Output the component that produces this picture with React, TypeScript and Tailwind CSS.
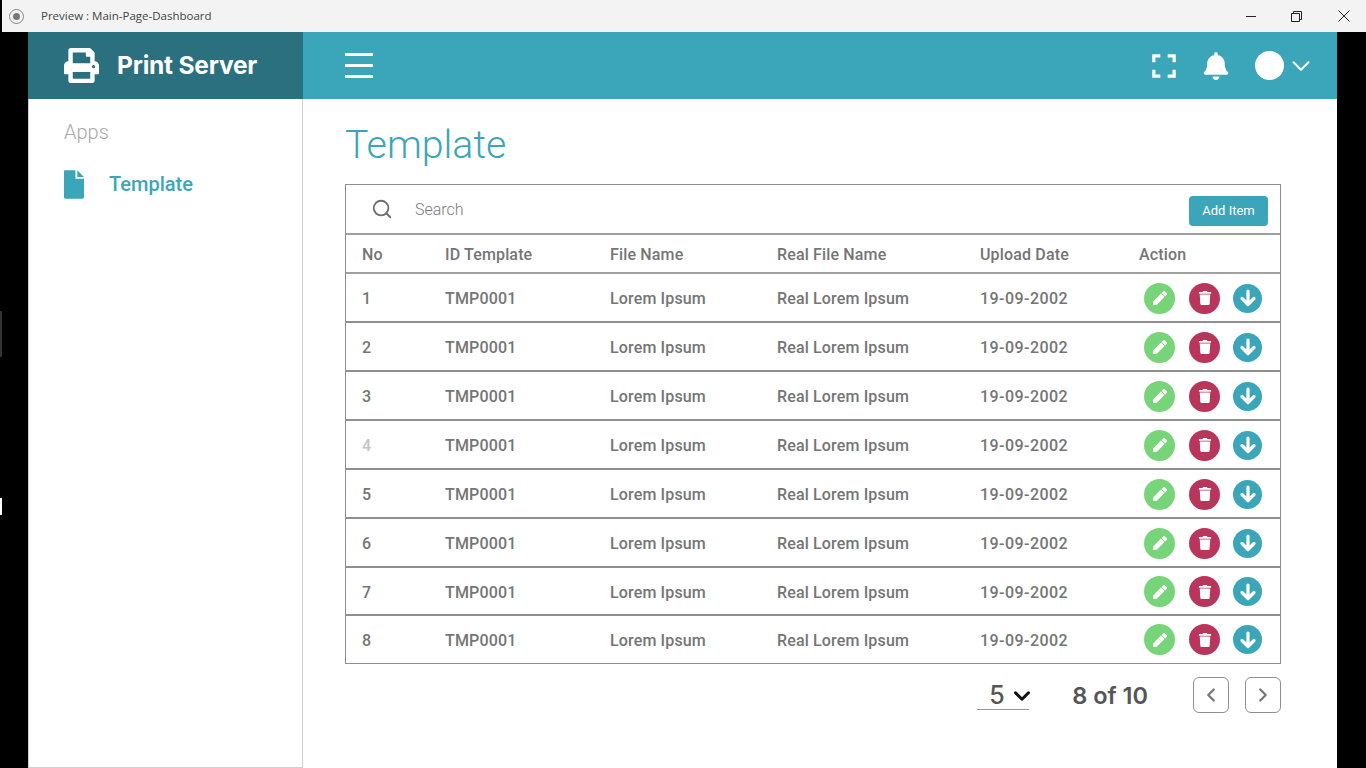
import { ChevronDown, ChevronLeft, ChevronRight, Search } from 'lucide-react';
import { FaBell, FaPen, FaPrint, FaTrash } from 'react-icons/fa';

const ROWS = [1, 2, 3, 4, 5, 6, 7, 8];
const COLS = 'grid grid-cols-[83px_165px_167px_203px_159px_1fr] items-center pl-4 tracking-[0.15px]';

// rows in the screenshot are not all the same height
function rowClass(row: number): string {
    if (row === 8) return 'h-[47px] pt-[2px]';
    if (row === 7) return 'h-[48px] border-b-2 pt-[3px]';
    return 'h-[49px] border-b-2 pt-[3px]';
}

function FileIcon() {
    return (
        <svg width="20" height="29" viewBox="0 0 21 30" className="text-[#3ba6b9]" fill="currentColor">
            <path d="M1 0h11v9h9v19.500a1.500 1.500 0 0 1-1.500 1.500h-18A1.500 1.500 0 0 1 0 28.500V1a1 1 0 0 1 1-1z" />
            <path d="M14 0l7 7h-7z" />
        </svg>
    );
}

function FullscreenIcon() {
    return (
        <svg width="24" height="24" viewBox="0 0 26 26" fill="none" stroke="white" strokeWidth="3.500">
            <path d="M2 9V2h7M17 2h7v7M24 17v7h-7M9 24H2v-7" />
        </svg>
    );
}

function ArrowIcon() {
    return (
        <svg width="20" height="20" viewBox="0 0 20 20" fill="none" stroke="white" strokeWidth="3.200" strokeLinecap="round" strokeLinejoin="round">
            <path d="M10 3v13M4 10.500l6 6 6-6" />
        </svg>
    );
}

function TitleBar() {
    return (
        <div className="ml-[2px] flex h-8 shrink-0 items-center bg-[#f3f3f3] font-['Open_Sans',sans-serif] text-[11.5px] text-[#444]">
            <div className="ml-[7px] flex h-[15px] w-[15px] items-center justify-center rounded-full border border-[#8a8a8a]">
                <div className="h-[7px] w-[7px] rounded-full bg-[#777]" />
            </div>
            <span className="ml-[17px]">Preview : Main-Page-Dashboard</span>
            <div className="ml-auto flex items-center text-[#222]">
                <div className="mr-[35px] h-px w-[10px] bg-[#222]" />
                <svg width="11" height="11" viewBox="0 0 11 11" fill="none" stroke="#222" className="mr-[36px]">
                    <path d="M.5 2.500h8v8h-8zM2.500 2.500v-2h8v8h-2" />
                </svg>
                <svg width="12" height="12" viewBox="0 0 12 12" fill="none" stroke="#222" className="mr-[16px]">
                    <path d="M.5.5l11 11M11.500.5l-11 11" />
                </svg>
            </div>
        </div>
    );
}

function Header() {
    return (
        <div className="flex h-[67px] shrink-0">
            <div className="flex w-[275px] shrink-0 items-center bg-[#2b707f] pl-[36px]">
                <FaPrint className="text-white" size={35} />
                <span className="ml-[18px] font-['Inter',sans-serif] text-[24.5px] font-bold tracking-[-0.2px] text-white">Print Server</span>
            </div>
            <div className="flex flex-1 items-center bg-[#3ba6b9] pl-[42px]">
                <div className="flex w-7 flex-col gap-[8px]">
                    <div className="h-[3px] bg-white" />
                    <div className="h-[3px] bg-white" />
                    <div className="h-[3px] bg-white" />
                </div>
                <div className="ml-auto flex items-center pr-[21px]">
                    <FullscreenIcon />
                    <FaBell size={28} className="ml-[26px] text-white" />
                    <div className="ml-[25px] h-[29px] w-[29px] rounded-full bg-white" />
                    <ChevronDown size={30} stroke="white" strokeWidth={1.6} className="ml-[2px]" />
                </div>
            </div>
        </div>
    );
}

function Sidebar() {
    return (
        <aside className="w-[275px] shrink-0 border-x border-b border-[#cfcfcf] bg-white pl-[35px]">
            <div className="pt-[21px] text-[20px] font-light leading-6 text-[#a9a9a9]">Apps</div>
            <div className="mt-[25px] flex items-center">
                <FileIcon />
                <span className="ml-[25px] text-[20px] font-medium text-[#3ba6b9]">Template</span>
            </div>
        </aside>
    );
}

function ActionButtons() {
    return (
        <div className="-mt-[2px] flex items-center pl-[5px]">
            <div className="flex h-[31px] w-[31px] items-center justify-center rounded-full bg-[#78d478]">
                <FaPen className="text-white" size={14} />
            </div>
            <div className="ml-[14px] flex h-[31px] w-[31px] items-center justify-center rounded-full bg-[#b8365b]">
                <FaTrash className="text-white" size={14} />
            </div>
            <div className="ml-[13px] flex h-[29px] w-[29px] items-center justify-center rounded-full bg-[#3ba6b9]">
                <ArrowIcon />
            </div>
        </div>
    );
}

function TemplateTable() {
    return (
        <div className="mt-[14px] border border-[#8f8f8f] bg-white">
            <div className="flex h-[50px] items-center border-b-2 border-[#a0a0a0] pl-[26px] pr-[12px]">
                <Search size={22} stroke="#6e6e6e" className="-ml-[1px]" />
                <span className="ml-[22px] pt-[2px] text-[16px] font-light text-[#7a7a7a]">Search</span>
                <div className="ml-auto mt-1 flex h-[30px] w-[79px] items-center justify-center rounded bg-[#3ba6b9] text-[13px] text-white">
                    Add Item
                </div>
            </div>
            <div className={`${COLS} h-[39px] border-b-2 border-[#a0a0a0] pt-[2px] text-[16px] font-medium text-[#757575]`}>
                <div>No</div>
                <div>ID Template</div>
                <div>File Name</div>
                <div>Real File Name</div>
                <div>Upload Date</div>
                <div>Action</div>
            </div>
            {ROWS.map(row => (
                <div
                    key={row}
                    className={`${COLS} ${rowClass(row)} border-[#8f8f8f] text-[16px] font-medium text-[#757575]`}
                >
                    <div className={row === 4 ? 'text-[#c4c4c4]' : ''}>{row}</div>
                    <div>TMP0001</div>
                    <div>Lorem Ipsum</div>
                    <div>Real Lorem Ipsum</div>
                    <div className="tracking-[0.45px]">19-09-2002</div>
                    <ActionButtons />
                </div>
            ))}
        </div>
    );
}

function Pagination() {
    return (
        <div className="mt-[13px] flex items-center justify-end font-['Inter',sans-serif] text-[#555]">
            <div className="mb-[3px] flex h-[33px] w-[52px] items-center border-b border-[#999] pl-[12px] pt-[5px] text-[25px] font-medium">
                <span>5</span>
                <ChevronDown size={26} stroke="#111" strokeWidth={2.8} className="ml-[4px] shrink-0" />
            </div>
            <div className="ml-[43px] pt-[1px] text-[23.5px] font-semibold">8 of 10</div>
            <div className="ml-[45px] flex h-9 w-9 items-center justify-center rounded-md border border-[#8f8f8f]">
                <ChevronLeft size={22} stroke="#777" strokeWidth={2.5} />
            </div>
            <div className="ml-[16px] flex h-9 w-9 items-center justify-center rounded-md border border-[#8f8f8f]">
                <ChevronRight size={22} stroke="#777" strokeWidth={2.5} />
            </div>
        </div>
    );
}

export default function App() {
    return (
        <div className="relative flex h-[768px] w-[1366px] flex-col overflow-hidden bg-black font-['Roboto',sans-serif]">
            <div className="absolute left-0 top-[311px] h-[46px] w-[2px] bg-[#333]" />
            <div className="absolute left-0 top-[498px] h-[17px] w-[2px] bg-white" />
            <TitleBar />
            <div className="ml-[28px] mr-[29px] flex min-h-0 flex-1 flex-col">
                <Header />
                <div className="flex min-h-0 flex-1">
                    <Sidebar />
                    <main className="flex-1 bg-white pl-[42px] pr-[56px]">
                        <h1 className="pt-[21px] text-[39.3px] font-light leading-[50px] text-[#3ba6b9]">Template</h1>
                        <TemplateTable />
                        <Pagination />
                    </main>
                </div>
            </div>
        </div>
    );
}
